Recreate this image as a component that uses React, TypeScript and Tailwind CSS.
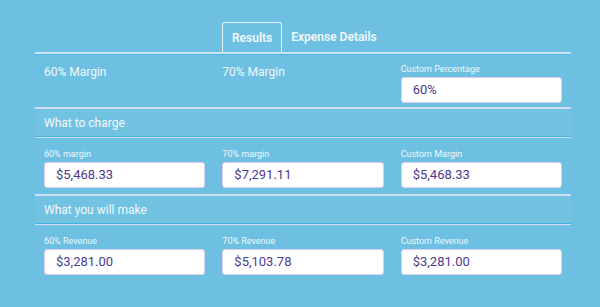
import React from 'react';

const rows = [
  {
    title: 'What to charge',
    fields: [
      { label: '60% margin', value: '$5,468.33' },
      { label: '70% margin', value: '$7,291.11' },
      { label: 'Custom Margin', value: '$5,468.33' },
    ],
  },
  {
    title: 'What you will make',
    fields: [
      { label: '60% Revenue', value: '$3,281.00' },
      { label: '70% Revenue', value: '$5,103.78' },
      { label: 'Custom Revenue', value: '$3,281.00' },
    ],
  },
];

const Field = ({ label, value }: { label: string; value: string }) => (
  <div className="flex flex-col">
    <span className="text-[9px] leading-[12px] text-[#eef8fc]">{label}</span>
    <div className="mt-[2px] flex h-[26px] items-center rounded-[3px] border border-[#dccdec] bg-white pl-[11px] text-[13px] text-[#4c3a8e]">
      {value}
    </div>
  </div>
);

const App = () => {
  return (
    <div className="h-[307px] w-[600px] bg-[#6dc0e1] pl-[35px] pr-[29px] pt-[22px] font-['Roboto',sans-serif] text-[#f1f9fc]">
      {/* tabs */}
      <div className="flex h-[30px] items-end justify-start pl-[187px]">
        <div className="flex h-[30px] items-center rounded-t-[3px] border border-b-0 border-[#e0f1f8] px-[9px] text-[12px] font-semibold">
          Results
        </div>
        <div className="flex h-[30px] items-center pl-[9px] text-[12px] font-semibold">Expense Details</div>
      </div>
      <div className="h-[2px] bg-[#cfe3ee] shadow-[0_1px_0_#4db5e4]" />

      {/* percentages */}
      <div className="grid grid-cols-3 gap-[17px] px-[9px] pb-[4px] pt-[9px]">
        <div className="pt-[2px] text-[12px] leading-[14px]">60% Margin</div>
        <div className="pt-[2px] text-[12px] leading-[14px]">70% Margin</div>
        <Field label="Custom Percentage" value="60%" />
      </div>

      {rows.map((row) => (
        <div key={row.title}>
          <div className="h-[2px] bg-[#d3dcf0]" />
          <div className="flex h-[27px] items-center bg-white/[0.04] px-[9px] text-[12px]">{row.title}</div>
          <div className="h-[1px] bg-[#40b2e6]" />
          <div className="h-[1px] bg-[#d3dcf0]" />
          <div className="grid grid-cols-3 gap-[17px] px-[9px] pb-[6px] pt-[10px]">
            {row.fields.map((f) => (
              <Field key={f.label} label={f.label} value={f.value} />
            ))}
          </div>
        </div>
      ))}
    </div>
  );
};

export default App;
